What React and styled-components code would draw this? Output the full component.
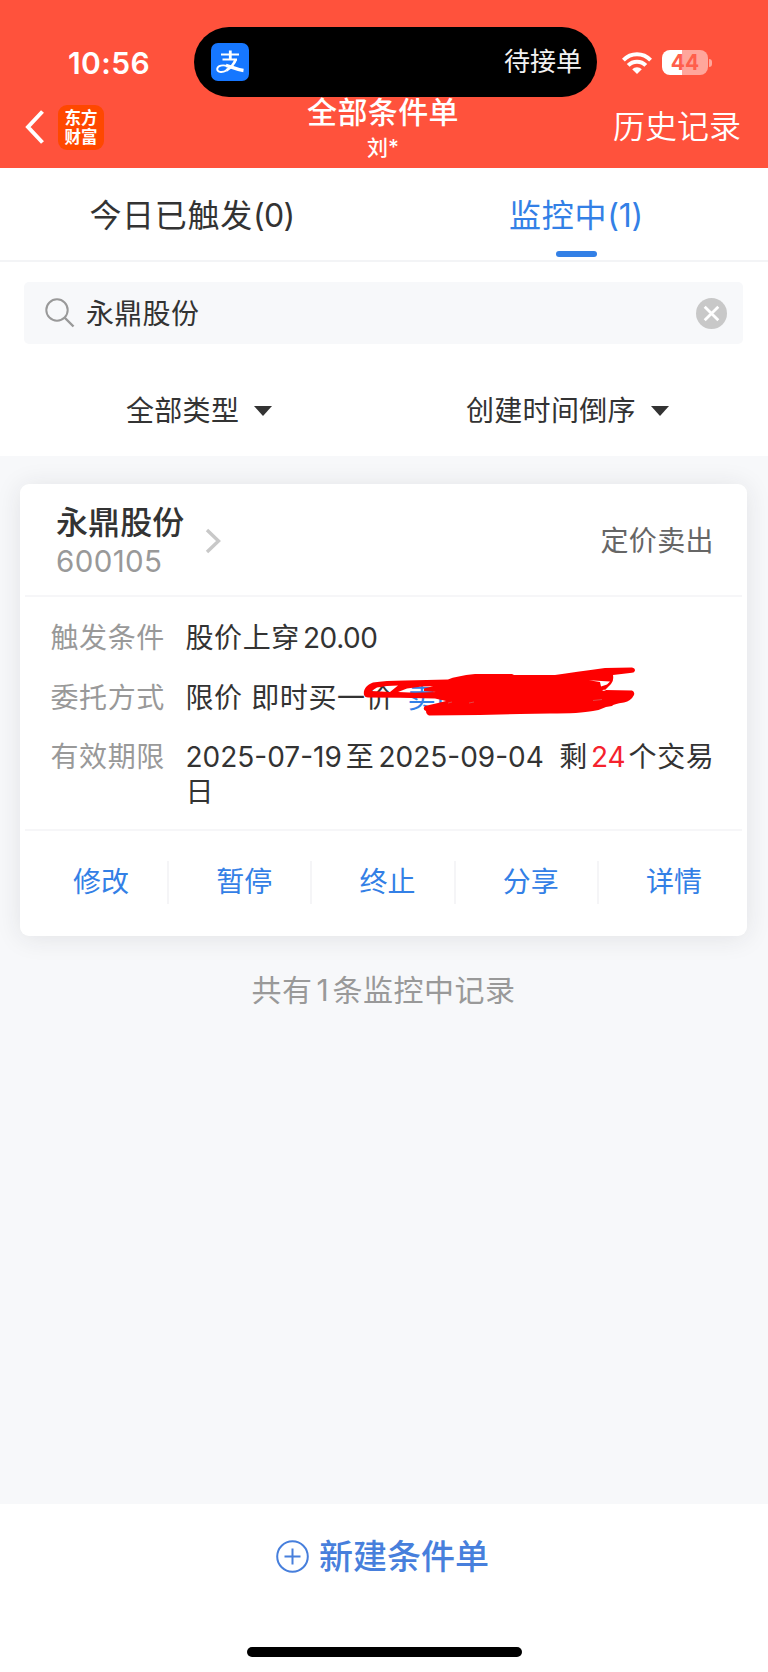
import React from 'react';
import styled, { createGlobalStyle } from 'styled-components';

const GlobalStyle = createGlobalStyle`
	* { box-sizing: border-box; }
	body {
		margin: 0;
		background: #fff;
		font-family: Inter, "Noto Sans CJK SC", sans-serif;
		color: #333;
	}
	svg { display: block; flex-shrink: 0; }
`;

const Screen = styled.div`
	position: relative;
	display: flex;
	flex-direction: column;
	width: 768px;
	height: 1672px;
	overflow: hidden;
	background: #f7f8fa;
`;

const Header = styled.header`
	height: 168px;
	background: #ff523c;
	color: #fff;
`;

const StatusBar = styled.div`
	display: flex;
	align-items: center;
	justify-content: space-between;
	height: 96px;
	padding: 29px 56px 0 68px;
`;

const Time = styled.span`
	font-size: 30px;
	line-height: 36px;
	font-weight: 600;
	letter-spacing: 0.4px;
`;

const StatusIcons = styled.div`
	display: flex;
	align-items: center;
	gap: 10px;
`;

const Battery = styled.div`
	display: flex;
	align-items: center;
	gap: 1px;
`;

const BatteryBody = styled.div`
	width: 46px;
	height: 25px;
	border-radius: 8px;
	background: linear-gradient(90deg, #fff ${(props) => props.$level}%, #ffa69b ${(props) => props.$level}%);
	color: #ff5f4b;
	font-size: 21px;
	line-height: 25px;
	font-weight: 700;
	text-align: center;
`;

const BatteryCap = styled.div`
	width: 3px;
	height: 8px;
	border-radius: 0 3px 3px 0;
	background: #ffa69b;
`;

const Island = styled.div`
	position: absolute;
	top: 27px;
	left: 194px;
	z-index: 2;
	display: flex;
	align-items: center;
	justify-content: space-between;
	width: 403px;
	height: 70px;
	padding: 0 15px 0 17px;
	border-radius: 35px;
	background: #000;
	color: #f2f2f2;
	font-size: 26px;
	line-height: 36px;
`;

const PayLogo = styled.div`
	width: 38px;
	height: 38px;
	border-radius: 7px;
	background: #1677ff;
`;

const NavBar = styled.div`
	display: grid;
	grid-template-columns: 200px 1fr 200px;
	height: 72px;
	padding: 0 27px 0 25px;
`;

const NavLeft = styled.div`
	display: flex;
	align-items: center;
	gap: 14px;
	height: 62px;
`;

const AppBadge = styled.div`
	width: 46px;
	height: 45px;
	padding-top: 4px;
	border-radius: 9px;
	background: #ff4800;
	font-size: 16.5px;
	line-height: 19px;
	font-weight: 700;
	text-align: center;
`;

const NavTitle = styled.div`
	text-align: center;
	white-space: nowrap;
`;

const Title = styled.h1`
	margin: -2px 0 0;
	font-size: 30px;
	line-height: 36px;
	font-weight: 500;
	letter-spacing: 0.4px;
`;

const Account = styled.div`
	font-size: 21px;
	line-height: 36px;
	font-weight: 500;
`;

const History = styled.div`
	font-size: 32px;
	line-height: 61px;
	font-weight: 350;
	text-align: right;
`;

const Tabs = styled.nav`
	display: grid;
	grid-template-columns: 1fr 1fr;
	height: 94px;
	border-bottom: 2px solid #f3f4f6;
	background: #fff;
`;

const Tab = styled.div`
	display: flex;
	flex-direction: column;
	align-items: center;
	justify-content: space-between;
	height: 89px;
	padding-top: 24px;
	color: ${(props) => (props.$active ? '#3380e6' : '#333')};
	font-size: 32px;
	line-height: 48px;
	letter-spacing: 0.7px;

	&::after {
		content: '';
		width: 41px;
		height: 6px;
		border-radius: 3px;
		background: ${(props) => (props.$active ? '#3380e6' : 'transparent')};
	}
`;

const Filters = styled.section`
	height: 194px;
	padding: 20px 25px 0 24px;
	background: #fff;
`;

const SearchBox = styled.div`
	display: flex;
	align-items: center;
	height: 62px;
	padding: 0 16px 0 21px;
	border-radius: 5px;
	background: #f7f8fa;
`;

const SearchText = styled.span`
	flex: 1;
	margin-left: 11px;
	padding-top: 2px;
	font-size: 28px;
	line-height: 40px;
	letter-spacing: 0.3px;
`;

const SelectRow = styled.div`
	display: flex;
	height: 134px;
	padding-left: 102px;
	align-items: center;
`;

const Select = styled.div`
	display: flex;
	align-items: center;
	gap: 15px;
	width: ${(props) => props.$width}px;
	font-size: 28px;
	line-height: 40px;
	letter-spacing: 0.3px;
	white-space: nowrap;

	&::after {
		content: '';
		border: 9.5px solid transparent;
		border-top: 10px solid #333;
		border-bottom: 0;
	}
`;

const Content = styled.main`
	flex: 1;
	padding: 28px 21px 0 20px;
`;

const Card = styled.article`
	height: 452px;
	padding: 0 5px;
	border-radius: 9px;
	background: #fff;
	box-shadow: 0 2px 26px rgba(40, 44, 52, 0.1);
`;

const CardHead = styled.div`
	display: flex;
	align-items: center;
	height: 113px;
	padding: 2px 28px 0 31px;
	border-bottom: 2px solid #f6f6f8;
`;

const StockName = styled.div`
	font-size: 32px;
	line-height: 40px;
	font-weight: 500;
	letter-spacing: 0.1px;
`;

const StockCode = styled.div`
	color: #999;
	font-size: 29.5px;
	line-height: 36px;
	letter-spacing: 0.4px;
`;

const OrderType = styled.div`
	margin-left: auto;
	color: #666;
	font-size: 28px;
	line-height: 40px;
	letter-spacing: 0.4px;
`;

const Details = styled.div`
	display: flex;
	flex-direction: column;
	gap: 24.5px;
	height: 234px;
	padding: 24px 20px 0 25.5px;
	border-bottom: 2px solid #f6f6f8;
	font-size: 28px;
	line-height: 35px;
	letter-spacing: 0.6px;
`;

const DetailRow = styled.div`
	position: relative;
	display: flex;
`;

const Label = styled.div`
	flex: 0 0 135px;
	color: #999;
`;

const Value = styled.div`
	flex: 1;
	white-space: pre-wrap;
`;

const Num = styled.span`
	margin: 0 ${(props) => props.$right || 0}px 0 ${(props) => props.$left || 0}px;
	color: ${(props) => props.$color || 'inherit'};
	letter-spacing: ${(props) => props.$spacing || 0}px;
`;

const Link = styled.span`
	margin-left: 5px;
	color: #3380e6;
`;

const Scribble = styled.svg`
	position: absolute;
	top: -17px;
	left: 309.5px;
`;

const Actions = styled.div`
	display: grid;
	grid-template-columns: repeat(5, 1fr);
	padding: 30px 0 0 1px;
`;

const Action = styled.div`
	height: 43px;
	padding-left: 9px;
	border-right: 2px solid #f5f5f7;
	color: #3380e6;
	font-size: 28px;
	line-height: 43px;
	text-align: center;

	&:last-child {
		border-right-color: transparent;
	}
`;

const Total = styled.p`
	margin: 34px 0 0;
	color: #999;
	font-size: 30px;
	line-height: 40px;
	letter-spacing: 0.5px;
	text-align: center;
`;

const Footer = styled.footer`
	display: flex;
	flex-direction: column;
	align-items: center;
	justify-content: space-between;
	height: 168px;
	padding: 27px 0 15px;
	background: #fff;
`;

const CreateButton = styled.div`
	display: flex;
	align-items: center;
	gap: 10px;
	padding-right: 3px;
	color: #477fdc;
	font-size: 34px;
	line-height: 48px;
	font-weight: 500;

	span {
		padding-top: 2px;
	}
`;

const HomeBar = styled.div`
	width: 275px;
	height: 10px;
	border-radius: 5px;
	background: #000;
`;

const ACTIONS = ['修改', '暂停', '终止', '分享', '详情'];

const PayIcon = () => (
	<svg width="38" height="38" viewBox="0 0 38 38" fill="none" stroke="#fff">
		<path d="M10 11.5h18M11.5 16.5H26" strokeWidth="1.9" />
		<path d="M19.3 7.5v9" strokeWidth="2.8" />
		<path d="M24.8 16.2C23.5 20 19.5 25.3 15.2 27.6" strokeWidth="2.8" />
		<path d="M15.4 27.5C10.5 30.3 6 28.9 6.2 25.9C6.5 22.3 12 21.6 17 23.2" strokeWidth="1.9" />
		<path d="M15 22.4C20 23.7 25 26.5 32.5 27.5" strokeWidth="3.4" />
	</svg>
);

const WifiIcon = () => (
	<svg width="30" height="22" viewBox="0 0 30 22" fill="none" stroke="#fff" strokeWidth="4">
		<path d="M1.4 8.2C9 .3 21 .3 28.6 8.2" />
		<path d="M6.2 13.4C11 8.5 19 8.5 23.8 13.4" />
		<path d="M15 22L10.2 17.2C12.8 14.5 17.2 14.5 19.8 17.2Z" fill="#fff" stroke="none" />
	</svg>
);

const SearchIcon = () => (
	<svg width="30" height="30" viewBox="0 0 30 30" fill="none" stroke="#999" strokeWidth="2">
		<circle cx="12" cy="12" r="10.7" />
		<path d="M19.5 19.5L28.5 28.5" strokeWidth="2.4" />
	</svg>
);

const ClearIcon = () => (
	<svg width="31" height="31" viewBox="0 0 31 31">
		<circle cx="15.5" cy="15.5" r="15.5" fill="#c8c8c8" />
		<path d="M8.7 8.7L22.3 22.3M22.3 8.7L8.7 22.3" stroke="#fff" strokeWidth="2.8" />
	</svg>
);

const Scrawl = () => (
	<Scribble width="280" height="54" viewBox="360 664 280 54">
		<path
			fill="#fe0000"
			fillRule="evenodd"
			d="M364 695C363 690 366 685 373 682.5Q385 680.5 405 680.5L448 679.5Q456 676 475 674H512L514 675H555Q575 672 605 668L632 667.5Q635 668 635 670.5Q634.5 672.7 632 672.7L613 675Q614 681 611 684L605 690L632 690.5Q635 692 634 695Q631 701 624 702.5Q613 704 612 706L606 707Q600 710 593 711Q580 713.5 550 713.5L520 714L480 715L429 715.5Q426 714 426 711Q422 709 425 706L438 703L446 701L435 698.5L400 697.7L368 697.5Q365 697.5 364 695Z
			M371.5 691L377 687.5L387 686L398 685.5L390 692Z
			M398 692L407 688.5L422 686.5L433 686.2L424 688.5V691L436 692L415 692.7Z
			M589 680.3L610 681.5L607 684.5L601 686.5L600 682Z
			M602 691L604 689.5L606 690.5Z"
		/>
		<path d="M593 700.5L602 699.5M448 703L452 702M469 703L474 702" stroke="#d55" strokeWidth="0.8" />
	</Scribble>
);

const App = () => (
	<>
		<GlobalStyle />
		<Screen>
			<Header>
				<StatusBar>
					<Time>10:56</Time>
					<StatusIcons>
						<WifiIcon />
						<Battery>
							<BatteryBody $level={44}>44</BatteryBody>
							<BatteryCap />
						</Battery>
					</StatusIcons>
				</StatusBar>
				<Island>
					<PayLogo>
						<PayIcon />
					</PayLogo>
					<span>待接单</span>
				</Island>
				<NavBar>
					<NavLeft>
						<svg width="19" height="34" viewBox="0 0 19 34" fill="none" stroke="#fff" strokeWidth="4">
							<path d="M17.5 1.5L3 17L17.5 32.5" />
						</svg>
						<AppBadge>
							东方
							<br />
							财富
						</AppBadge>
					</NavLeft>
					<NavTitle>
						<Title>全部条件单</Title>
						<Account>刘*</Account>
					</NavTitle>
					<History>历史记录</History>
				</NavBar>
			</Header>
			<Tabs>
				<Tab>
					<span>
						今日已触发<Num $spacing={-0.6}>(0)</Num>
					</span>
				</Tab>
				<Tab $active>
					<span>
						监控中<Num $spacing={-0.2}>(1)</Num>
					</span>
				</Tab>
			</Tabs>
			<Filters>
				<SearchBox>
					<SearchIcon />
					<SearchText>永鼎股份</SearchText>
					<ClearIcon />
				</SearchBox>
				<SelectRow>
					<Select $width={340}>全部类型</Select>
					<Select $width={210}>创建时间倒序</Select>
				</SelectRow>
			</Filters>
			<Content>
				<Card>
					<CardHead>
						<div>
							<StockName>永鼎股份</StockName>
							<StockCode>600105</StockCode>
						</div>
						<svg width="38" height="26" viewBox="0 0 38 26" fill="none" stroke="#c8c8c8" strokeWidth="3.4">
							<path d="M23 2L34.500 13L23 24" />
						</svg>
						<OrderType>定价卖出</OrderType>
					</CardHead>
					<Details>
						<DetailRow>
							<Label>触发条件</Label>
							<Value>
								股价上穿<Num $left={3} $spacing={-0.4}>20.00</Num>
							</Value>
						</DetailRow>
						<DetailRow>
							<Label>委托方式</Label>
							<Value>
								限价 即时买一价 <Link>卖出</Link>
							</Value>
							<Scrawl />
						</DetailRow>
						<DetailRow>
							<Label>有效期限</Label>
							<Value>
								<Num $right={4}>2025-07-19</Num>至<Num $left={4} $right={7}>2025-09-04</Num> 剩
								<Num $left={3} $right={3} $color="#f5222d">24</Num>个交易日
							</Value>
						</DetailRow>
					</Details>
					<Actions>
						{ACTIONS.map((action) => (
							<Action key={action}>{action}</Action>
						))}
					</Actions>
				</Card>
				<Total>
					共有<Num $left={4} $right={4}>1</Num>条监控中记录
				</Total>
			</Content>
			<Footer>
				<CreateButton>
					<svg width="33" height="33" viewBox="0 0 33 33" fill="none" stroke="currentColor" strokeWidth="2">
						<circle cx="16.5" cy="16.5" r="15.3" />
						<path d="M8.5 16.5h16M16.5 8.5v16" />
					</svg>
					<span>新建条件单</span>
				</CreateButton>
				<HomeBar />
			</Footer>
		</Screen>
	</>
);

export default App;
